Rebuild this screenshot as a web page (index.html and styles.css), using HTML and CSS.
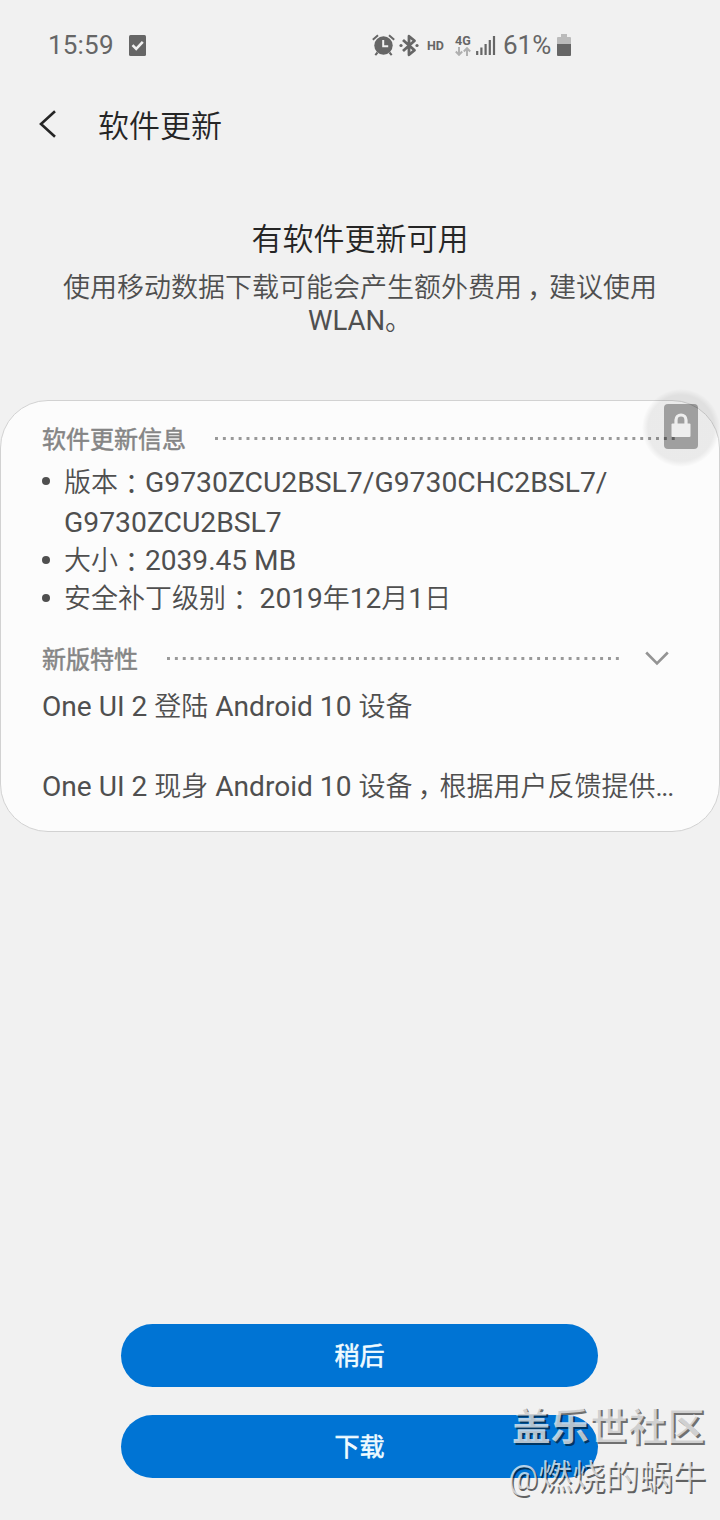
FILE: index.html
```html
<!DOCTYPE html>
<html lang="zh-CN">
<head>
    <meta charset="UTF-8">
    <meta name="viewport" content="width=device-width, initial-scale=1.0">
    <title>软件更新</title>
    <link rel="stylesheet" href="styles.css">
</head>
<body>
    <div class="screen">
        <div class="status-bar">
            <span class="status-time">15:59</span>
            <svg class="icon-task" width="17" height="21" viewBox="0 0 17 21">
                <rect width="17" height="21" rx="1.5" fill="#666"/>
                <path d="M3.5 10.2l3.7 3.7 6.6-7" fill="none" stroke="#f1f1f1" stroke-width="2.6"/>
            </svg>
            <div class="status-icons">
                <svg class="icon-alarm" width="23" height="22" viewBox="0 0 23 22">
                    <circle cx="11.5" cy="11.5" r="9.2" fill="#666"/>
                    <path d="M.8 5.8L6 1.2M22.2 5.8L17 1.2M5.5 18.5l-2.2 2.7M17.5 18.5l2.2 2.7" stroke="#666" stroke-width="2"/>
                    <path d="M11.2 6v6.2h5" fill="none" stroke="#f1f1f1" stroke-width="2"/>
                </svg>
                <svg class="icon-bt" width="20" height="23" viewBox="0 0 20 23">
                    <path d="M4 6l11.5 10.2L10 20.8V2.2l5.5 4.6L4 17" fill="none" stroke="#666" stroke-width="2.8" stroke-linejoin="round"/>
                    <circle cx="2" cy="11.5" r="1.6" fill="#666"/>
                    <circle cx="18" cy="11.5" r="1.6" fill="#666"/>
                </svg>
                <span class="status-hd">HD</span>
                <div class="network">
                    <span>4G</span>
                    <svg width="16" height="9" viewBox="0 0 16 9">
                        <path d="M4 0v7.5M.8 4.5L4 7.8l3.2-3.3M12 9V1.5M8.8 4.5L12 1.2l3.2 3.3" fill="none" stroke="#b0b0b0" stroke-width="2"/>
                    </svg>
                </div>
                <svg class="icon-signal" width="20" height="20" viewBox="0 0 20 20">
                    <path d="M1.2 20v-4M5.4 20v-7.5M9.6 20v-11M13.8 20V5M18 20V1" stroke="#666" stroke-width="2.2"/>
                </svg>
                <span class="status-percent">61%</span>
                <svg class="icon-battery" width="14" height="22" viewBox="0 0 14 22">
                    <path d="M4 0h6v3h3a1 1 0 0 1 1 1v6H0V4a1 1 0 0 1 1-1h3z" fill="#bbb"/>
                    <path d="M0 10h14v11a1 1 0 0 1-1 1H1a1 1 0 0 1-1-1z" fill="#666"/>
                </svg>
            </div>
        </div>

        <header class="app-bar">
            <svg width="18" height="28" viewBox="0 0 18 28">
                <path d="M16 1.2L2 14l14 12.8" fill="none" stroke="#252525" stroke-width="2.6"/>
            </svg>
            <h1>软件更新</h1>
        </header>

        <section class="intro">
            <h2>有软件更新可用</h2>
            <p>使用移动数据下载可能会产生额外费用<span class="comma" lang="zh-TW">，</span>建议使用<br><span class="latin">WLAN</span>。</p>
        </section>

        <section class="card">
            <div class="section-head info-head">
                <h3>软件更新信息</h3>
                <span class="dots"></span>
            </div>
            <ul class="info-list">
                <li class="version">版本<span class="colon" lang="zh-TW">：</span><span class="latin">G9730ZCU2BSL7/G9730CHC2BSL7/<br>G9730ZCU2BSL7</span></li>
                <li>大小<span class="colon" lang="zh-TW">：</span><span class="latin">2039.45 MB</span></li>
                <li>安全补丁级别<span class="colon" lang="zh-TW">：</span> <span class="latin">2019</span>年<span class="latin">12</span>月<span class="latin">1</span>日</li>
            </ul>
            <div class="section-head features-head">
                <h3>新版特性</h3>
                <span class="dots"></span>
                <svg width="24" height="15" viewBox="0 0 24 15">
                    <path d="M1.2 1.5L12 12.5 22.8 1.5" fill="none" stroke="#949494" stroke-width="2.6"/>
                </svg>
            </div>
            <div class="features">
                <p><span class="latin">One UI 2 </span>登陆<span class="latin"> Android 10 </span>设备</p>
                <p><span class="latin">One UI 2 </span>现身<span class="latin"> Android 10 </span>设备<span class="comma" lang="zh-TW">，</span>根据用户反馈提供<span class="ellipsis">...</span></p>
            </div>
            <div class="float-lock">
                <svg width="34" height="45" viewBox="0 0 34 45">
                    <rect width="34" height="45" rx="4" fill="#000" fill-opacity=".32"/>
                    <path d="M12 21v-5a5 5 0 0 1 10 0v5" fill="none" stroke="#eee" stroke-width="3.2"/>
                    <rect x="7.5" y="19.5" width="19" height="13.5" rx="1" fill="#eee"/>
                </svg>
            </div>
        </section>

        <div class="actions">
            <button class="action-btn">稍后</button>
            <button class="action-btn">下载</button>
        </div>

        <div class="watermark">
            <div class="watermark-site">盖乐世社区</div>
            <div class="watermark-user">@燃烧的蜗牛</div>
        </div>
    </div>
</body>
</html>
```
FILE: styles.css
```css
* {
    box-sizing: border-box;
}

body {
    margin: 0;
    background: #f1f1f1;
    font-family: Roboto, "Noto Sans CJK SC", sans-serif;
    font-weight: 350;
    color: #4f4f4f;
}

h1, h2, h3, p, ul {
    margin: 0;
    padding: 0;
    font-weight: inherit;
}

svg {
    display: block;
    flex: none;
}

.screen {
    position: relative;
    width: 720px;
    height: 1520px;
    display: flex;
    flex-direction: column;
    overflow: hidden;
}

.status-bar {
    display: flex;
    align-items: center;
    height: 90px;
    padding: 0 149px 0 48px;
    color: #666;
    font-size: 26px;
    font-weight: 400;
}

.status-time {
    width: 81px;
    letter-spacing: .2px;
}

.status-icons {
    display: flex;
    align-items: center;
    margin-left: auto;
}

.icon-alarm {
    margin-left: -1px;
}

.icon-bt {
    margin-left: 4px;
}

.status-hd {
    width: 18px;
    margin-left: 8px;
    font-size: 12.5px;
    font-weight: 700;
}

.network {
    width: 16px;
    margin-left: 10px;
    font-size: 12.5px;
    font-weight: 700;
    line-height: 11px;
}

.network svg {
    margin-top: 1px;
}

.icon-signal {
    margin-left: 5px;
}

.status-percent {
    width: 50px;
    margin-left: 7px;
}

.icon-battery {
    margin-left: 4px;
}

.app-bar {
    display: flex;
    align-items: center;
    gap: 41px;
    height: 68px;
    padding-left: 39px;
    color: #252525;
}

.app-bar h1 {
    padding-bottom: 1px;
    font-size: 31px;
}

.intro {
    padding-top: 59px;
    height: 242px;
    text-align: center;
}

.intro h2 {
    font-size: 31px;
    line-height: 46px;
    color: #252525;
}

.intro p {
    margin-top: 9px;
    font-size: 27px;
    line-height: 33px;
}

/* latin runs are set a little larger than the hanzi */
.latin {
    font-size: 28.1px;
    font-weight: 400;
    line-height: 1;
}

.intro .latin {
    font-size: 27.5px;
}

.version .latin {
    font-size: 28.3px;
}

.colon,
.comma {
    position: relative;
    font-family: "Noto Sans CJK TC", sans-serif;
    line-height: 1;
}

.colon {
    top: 2px;
}

.comma {
    top: 9px;
    left: -2px;
}

.ellipsis {
    font-weight: 400;
    letter-spacing: -1.2px;
}

.card {
    position: relative;
    height: 432px;
    padding: 19px 41px 0;
    background: #fcfcfc;
    border: 1px solid #d2d2d2;
    border-radius: 48px;
    font-size: 27px;
}

.section-head {
    display: flex;
    align-items: center;
    height: 37px;
}

.section-head h3 {
    padding-bottom: 2px;
    font-size: 24px;
    font-weight: 400;
    color: #858585;
    -webkit-text-stroke: .5px #858585;
}

.dots {
    flex: 1;
    height: 3px;
    margin-left: 29px;
    background: linear-gradient(90deg, #999 3px, transparent 3px) 0 0 / 7.89px 3px;
}

.info-list {
    list-style: none;
    margin-top: 6px;
}

.info-list li {
    position: relative;
    padding-left: 22px;
    line-height: 38px;
}

.info-list .version {
    height: 79px;
    line-height: 40px;
}

.version .latin {
    line-height: 40px;
}

.info-list li::before {
    content: "";
    position: absolute;
    left: 0;
    top: 14px;
    width: 8px;
    height: 8px;
    border-radius: 50%;
    background: #4f4f4f;
}

.features-head {
    margin-top: 22px;
    padding-right: 9px;
}

.features-head .dots {
    margin-right: 24px;
}

.features {
    margin-top: 10px;
    white-space: nowrap;
}

.features p {
    line-height: 40px;
}

.features p + p {
    margin-top: 40px;
}

.float-lock {
    position: absolute;
    top: -12px;
    left: 641px;
    display: flex;
    justify-content: center;
    padding-top: 15px;
    width: 78px;
    height: 78px;
    border-radius: 50%;
    background: radial-gradient(circle, rgba(0, 0, 0, .07) 60%, transparent 71%);
}

.actions {
    display: flex;
    flex-direction: column;
    align-items: center;
    gap: 28px;
    margin-top: auto;
    padding: 0 1px 42px 0;
}

.action-btn {
    width: 477px;
    height: 63px;
    padding: 0 0 4px;
    border: none;
    border-radius: 32px;
    background: #0074d4;
    color: #f0fbff;
    font-family: inherit;
    font-size: 25px;
    font-weight: 400;
    -webkit-text-stroke: .6px #f0fbff;
}

.watermark {
    position: absolute;
    left: 508px;
    top: 1402px;
    white-space: nowrap;
    font-weight: 400;
    color: rgba(241, 241, 241, .75);
}

.watermark-site {
    padding-left: 4px;
    font-size: 38.5px;
    font-weight: 700;
    line-height: 50px;
    text-shadow: 2px 2px 0 rgba(0, 0, 0, .55);
}

.watermark-user {
    font-size: 33.6px;
    line-height: 52px;
    text-shadow: 1.5px 1.5px 0 rgba(0, 0, 0, .6);
}
```
